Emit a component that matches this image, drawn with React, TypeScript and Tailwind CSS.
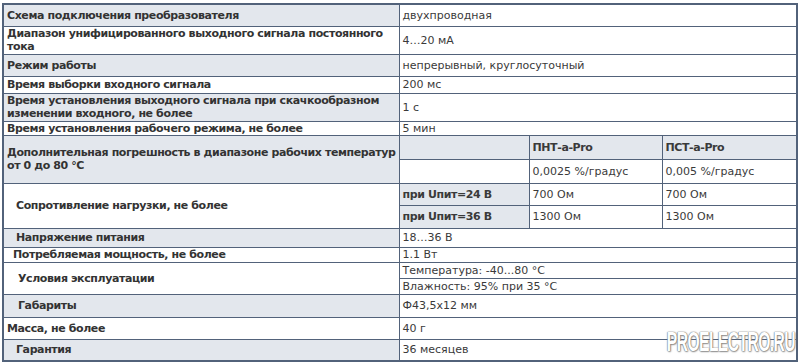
import React from "react";

const gray = "bg-[#e3e7ed]";
const cell = "border border-[#52627a] px-[3px] py-0 align-middle";
const leftCell = `${cell} font-bold text-[#333333] tracking-[-0.4px]`;
const rightCell = `${cell} text-[#3a3a3a]`;
const subHead = "font-bold tracking-[-0.4px]";

const App = () => {
  return (
    <div className="relative w-[800px] h-[362px] bg-white overflow-hidden font-['DejaVu_Sans',Verdana,sans-serif] text-[11px] leading-[13px]">
      <table className="ml-[2px] mt-[3px] w-[794px] table-fixed border-collapse border-2 border-[#52627a]">
        <colgroup>
          <col className="w-[396px]" />
          <col className="w-[130px]" />
          <col className="w-[133px]" />
          <col className="w-[135px]" />
        </colgroup>
        <tbody>
          <tr className="h-[22px]">
            <td className={`${leftCell} ${gray}`}>Схема подключения преобразователя</td>
            <td colSpan={3} className={rightCell}>двухпроводная</td>
          </tr>
          <tr className="h-[28px]">
            <td className={`${leftCell} pr-0`}>Диапазон унифицированного выходного сигнала постоянного тока</td>
            <td colSpan={3} className={rightCell}>4…20 мА</td>
          </tr>
          <tr className="h-[22px]">
            <td className={`${leftCell} ${gray}`}>Режим работы</td>
            <td colSpan={3} className={rightCell}>непрерывный, круглосуточный</td>
          </tr>
          <tr className="h-[17px]">
            <td className={leftCell}>Время выборки входного сигнала</td>
            <td colSpan={3} className={rightCell}>200 мс</td>
          </tr>
          <tr className="h-[28px]">
            <td className={`${leftCell} ${gray} pr-0`}>
              Время установления выходного сигнала при скачкообразном изменении входного, не более
            </td>
            <td colSpan={3} className={rightCell}>1 с</td>
          </tr>
          <tr className="h-[14px]">
            <td className={leftCell}>Время установления рабочего режима, не более</td>
            <td colSpan={3} className={rightCell}>5 мин</td>
          </tr>

          {/* погрешность */}
          <tr className="h-[24px]">
            <td rowSpan={2} className={`${leftCell} ${gray} pr-0`}>
              Дополнительная погрешность в диапазоне рабочих температур от 0 до 80 °С
            </td>
            <td className={`${rightCell} ${gray}`}></td>
            <td className={`${rightCell} ${gray} ${subHead}`}>ПНТ-a-Pro</td>
            <td className={`${rightCell} ${gray} ${subHead}`}>ПСТ-a-Pro</td>
          </tr>
          <tr className="h-[24px]">
            <td className={rightCell}></td>
            <td className={rightCell}>0,0025 %/градус</td>
            <td className={rightCell}>0,005 %/градус</td>
          </tr>

          {/* сопротивление */}
          <tr className="h-[22px]">
            <td rowSpan={2} className={`${leftCell} pl-[12px]`}>Сопротивление нагрузки, не более</td>
            <td className={`${rightCell} ${gray} ${subHead}`}>при Uпит=24 В</td>
            <td className={rightCell}>700 Ом</td>
            <td className={rightCell}>700 Ом</td>
          </tr>
          <tr className="h-[23px]">
            <td className={`${rightCell} ${gray} ${subHead}`}>при Uпит=36 В</td>
            <td className={rightCell}>1300 Ом</td>
            <td className={rightCell}>1300 Ом</td>
          </tr>

          <tr className="h-[19px]">
            <td className={`${leftCell} ${gray} pl-[12px]`}>Напряжение питания</td>
            <td colSpan={3} className={rightCell}>18…36 В</td>
          </tr>
          <tr className="h-[15px]">
            <td className={`${leftCell} pl-[9px]`}>Потребляемая мощность, не более</td>
            <td colSpan={3} className={rightCell}>1.1 Вт</td>
          </tr>
          <tr className="h-[16px]">
            <td rowSpan={2} className={`${leftCell} pl-[14px]`}>Условия эксплуатации</td>
            <td colSpan={3} className={rightCell}>Температура: -40...80 °С</td>
          </tr>
          <tr className="h-[16px]">
            <td colSpan={3} className={rightCell}>Влажность: 95% при 35 °С</td>
          </tr>
          <tr className="h-[23px]">
            <td className={`${leftCell} ${gray} pl-[14px]`}>Габариты</td>
            <td colSpan={3} className={rightCell}>Ф43,5х12 мм</td>
          </tr>
          <tr className="h-[22px]">
            <td className={leftCell}>Масса, не более</td>
            <td colSpan={3} className={rightCell}>40 г</td>
          </tr>
          <tr className="h-[22px]">
            <td className={`${leftCell} ${gray} pl-[12px]`}>Гарантия</td>
            <td colSpan={3} className={rightCell}>36 месяцев</td>
          </tr>
        </tbody>
      </table>

      {/* watermark */}
      <div className="absolute right-[5px] bottom-[6px] font-['Liberation_Sans_Narrow','Liberation_Sans',sans-serif] text-[27px] leading-[27px] font-bold text-white tracking-[-1px] origin-right scale-x-[0.58] [text-shadow:0_0_1px_#666,0_0_2px_#777,1px_1px_2px_#999]">
        PROELECTRO.RU
      </div>
    </div>
  );
};

export default App;
